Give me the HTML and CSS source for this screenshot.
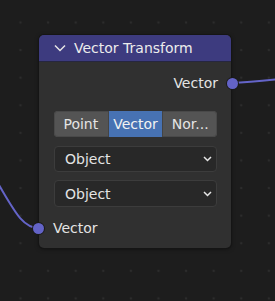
FILE: index.html
```html
<!DOCTYPE html>
<html lang="en">
<head>
  <meta charset="UTF-8" />
  <title>Vector Transform</title>
  <link rel="stylesheet" href="styles.css">
</head>
<body>
  <svg class="wires" width="275" height="301" viewBox="0 0 275 301">
    <path d="M231 83 C 250 82, 260 81, 280 79" />
    <path d="M-4 180 C 14 210, 22 228, 39 228" />
  </svg>

  <div class="node">
    <div class="node-header">
      <svg class="collapse" width="12" height="8" viewBox="0 0 12 8">
        <path d="M1 1.5 L6 6.5 L11 1.5" />
      </svg>
      <span>Vector Transform</span>
    </div>
    <div class="node-body">
      <div class="socket-row output">
        <span>Vector</span>
        <span class="socket"></span>
      </div>

      <div class="segmented">
        <div class="seg">Point</div>
        <div class="seg active">Vector</div>
        <div class="seg">Nor...</div>
      </div>

      <div class="dropdown">
        <span>Object</span>
        <svg width="9" height="6" viewBox="0 0 9 6"><path d="M1 1 L4.5 4.5 L8 1" /></svg>
      </div>
      <div class="dropdown">
        <span>Object</span>
        <svg width="9" height="6" viewBox="0 0 9 6"><path d="M1 1 L4.5 4.5 L8 1" /></svg>
      </div>

      <div class="socket-row input">
        <span class="socket"></span>
        <span>Vector</span>
      </div>
    </div>
  </div>
</body>
</html>
```

FILE: styles.css
```css
body {
  margin: 0;
  width: 275px;
  height: 301px;
  overflow: hidden;
  position: relative;
  background-color: #1d1d1d;
  background-image: radial-gradient(circle, #2c2c2c 1.2px, transparent 1.6px);
  background-size: 27.6px 27.6px;
  background-position: 6.7px 8.7px;
  font-family: "DejaVu Sans", sans-serif;
  font-size: 14px;
  color: #e4e4e4;
}
.wires {
  position: absolute;
  left: 0;
  top: 0;
}
.wires path {
  fill: none;
  stroke: #6464c8;
  stroke-width: 2;
}
.node {
  position: absolute;
  left: 39px;
  top: 35px;
  width: 192px;
  height: 213px;
  background: #303030;
  border-radius: 5px;
  box-shadow: 0 0 0 1px #151515, 0 1px 4px rgba(0, 0, 0, 0.5);
  display: flex;
  flex-direction: column;
}
.node-header {
  height: 27px;
  background: #3d3b7f;
  border-radius: 5px 5px 0 0;
  border-bottom: 1px solid #262640;
  box-sizing: border-box;
  display: flex;
  align-items: center;
  gap: 8px;
  padding-left: 15px;
  color: #ececec;
}
.collapse path,
.dropdown path {
  fill: none;
  stroke: #e6e6e6;
  stroke-width: 1.5;
}
.node-body {
  flex: 1;
  display: flex;
  flex-direction: column;
  padding: 10px 14px 0 15px;
}
.socket-row {
  height: 22px;
  display: flex;
  align-items: center;
  gap: 9px;
}
.socket-row.output {
  justify-content: flex-end;
  margin-right: -21px;
  gap: 9px;
}
.socket-row.input {
  margin-left: -21px;
  margin-top: 10px;
}
.socket {
  width: 11px;
  height: 11px;
  border-radius: 50%;
  background: #6363c7;
  box-shadow: 0 0 0 1px #1a1a1a;
}
.segmented {
  margin-top: 17px;
  height: 26px;
  display: flex;
  background: #545454;
  border-radius: 4px;
  box-shadow: inset 0 0 0 1px #494949;
  overflow: hidden;
}
.seg {
  flex: 1;
  display: flex;
  align-items: center;
  justify-content: center;
  color: #e4e4e4;
  border-right: 1px solid #444;
}
.seg:last-child {
  border-right: none;
}
.seg.active {
  background: #4772b3;
  color: #f2f2f2;
}
.dropdown {
  margin-top: 9px;
  height: 26px;
  box-sizing: border-box;
  background: #282828;
  border: 1px solid #3c3c3c;
  border-radius: 4px;
  display: flex;
  align-items: center;
  justify-content: space-between;
  padding: 0 4px 0 10px;
}
.dropdown + .dropdown {
  margin-top: 8px;
  height: 27px;
}
```
